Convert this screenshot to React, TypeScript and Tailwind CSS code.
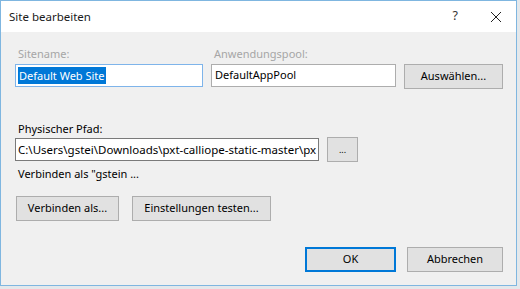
import React from "react";

const font = { fontFamily: '"Noto Sans", "Open Sans", sans-serif' };

function Btn({ w, children, primary }: { w: string; children: React.ReactNode; primary?: boolean }) {
  return (
    <div
      className={`${w} h-[25px] flex items-center justify-center bg-[#e1e1e1] text-[11px] text-black ${
        primary ? "border-2 border-[#0078d7]" : "border border-[#adadad]"
      }`}
    >
      {children}
    </div>
  );
}

export default function App() {
  return (
    <div className="w-[520px] h-[289px] bg-[#e4e8eb] overflow-hidden" style={font}>
      <div className="w-[517px] h-[286px] border border-[#7fb6e0] flex flex-col">
        <div className="h-[31px] bg-white flex items-center shrink-0">
          <span className="ml-[8px] text-[11.5px] text-[#1a1a1a]">Site bearbeiten</span>
          <span className="ml-auto mr-[32px] text-[12.5px] text-[#333]">?</span>
          <svg width="12" height="12" viewBox="0 0 12 12" className="mr-[14px]">
            <path d="M1 1 L11 11 M11 1 L1 11" stroke="#222" strokeWidth="1" fill="none" />
          </svg>
        </div>
        <div className="flex-1 bg-[#f0f0f0] flex flex-col pl-[14px] text-[11px] text-black">
          <div className="flex items-start mt-[14px]">
            <div className="w-[188px] flex flex-col">
              <span className="pl-[3px] h-[15px] leading-[15px] text-[#a6a6a6]">Sitename:</span>
              <div className="mt-[3px] h-[23px] border border-[#7eb4ea] bg-white flex items-center pl-[2px]">
                <span className="bg-[#0078d7] text-white leading-[17px] px-[1px]">Default Web Site</span>
              </div>
            </div>
            <div className="w-[185px] ml-[8px] flex flex-col">
              <span className="pl-[3px] h-[15px] leading-[15px] text-[#a6a6a6]">Anwendungspool:</span>
              <div className="mt-[3px] h-[23px] border border-[#adadad] bg-white flex items-center pl-[3px]">
                DefaultAppPool
              </div>
            </div>
            <div className="ml-[8px] mt-[18px]">
              <Btn w="w-[99px]">Auswählen...</Btn>
            </div>
          </div>
          <span className="mt-[32px] pl-[3px] h-[15px] leading-[15px]">Physischer Pfad:</span>
          <div className="flex items-start mt-[1px]">
            <div className="mt-[1px] w-[304px] h-[23px] border border-[#7a7a7a] bg-white flex items-center pl-[2px] overflow-hidden whitespace-nowrap text-[11.5px]">
              C:\Users\gstei\Downloads\pxt-calliope-static-master\px
            </div>
            <div className="ml-[8px]">
              <Btn w="w-[31px]">
                <span className="text-[9px] leading-none">...</span>
              </Btn>
            </div>
          </div>
          <span className="mt-[4px] pl-[3px] h-[15px] leading-[15px]">Verbinden als "gstein ...</span>
          <div className="flex mt-[15px] ml-[1px] gap-[13px]">
            <Btn w="w-[103px]">Verbinden als...</Btn>
            <Btn w="w-[139px]">Einstellungen testen...</Btn>
          </div>
          <div className="flex mt-[26px] ml-[290px] gap-[11px]">
            <Btn w="w-[91px]" primary>OK</Btn>
            <Btn w="w-[96px]">Abbrechen</Btn>
          </div>
        </div>
      </div>
    </div>
  );
}
